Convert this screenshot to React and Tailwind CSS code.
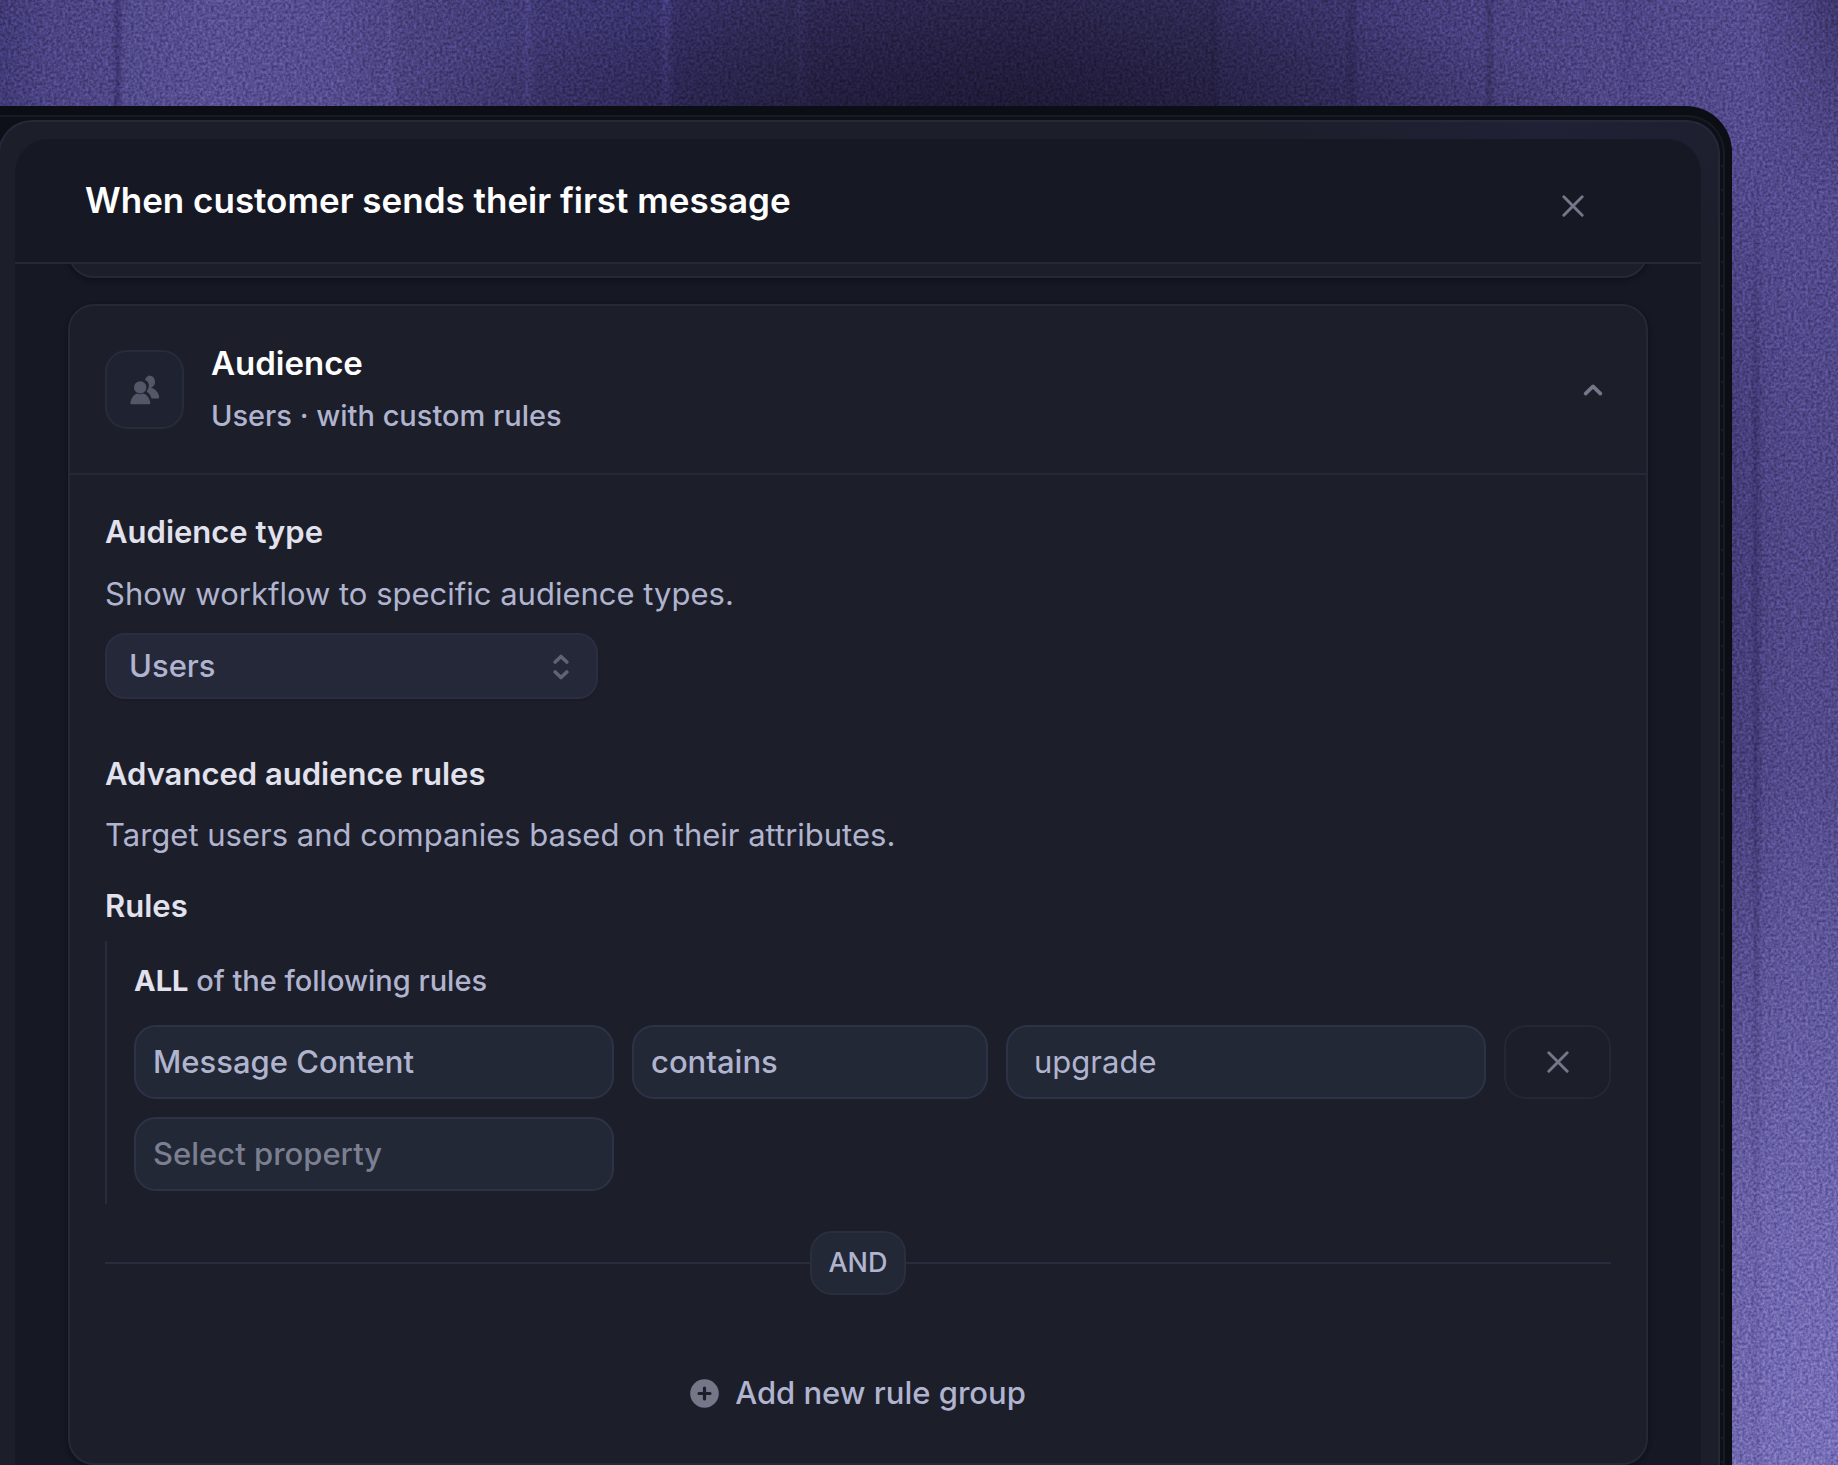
import { useId, useState } from "react";

function Backdrop() {
  return (
    <div aria-hidden="true" className="absolute inset-0 -z-10 overflow-hidden bg-[#4f4788]">
      <div className="absolute inset-0 bg-[linear-gradient(90deg,#403a76_0%,#4a4382_2.5%,#4e4686_6.1%,#3a3470_6.4%,#514a8a_6.7%,#574f92_12%,#544c8e_18%,#4d4584_20.9%,#524a8a_21.2%,#4a4380_21.6%,#413b76_28.4%,#474080_28.7%,#3e3872_29.2%,#38336c_35.9%,#423c7c_36.2%,#352f64_36.7%,#302b56_43.3%,#36305f_43.5%,#2f2954_44%,#2b254c_55%,#2f2a54_65.8%,#2b254c_66%,#322d5c_66.4%,#3a346a_73.2%,#332e60_73.5%,#3e3872_74%,#484180_80.7%,#3c366c_81%,#494280_81.4%,#4e4686_88.1%,#4a4282_88.4%,#4f4788_90%,#534b8c_95.6%,#4d4586_96.2%,#4a4280_97.5%,#3d366c_100%)]" />
      <div className="absolute inset-x-0 top-0 h-32 bg-[radial-gradient(ellipse_34%_110%_at_54%_100%,rgba(22,18,40,0.7),rgba(22,18,40,0)_100%)]" />
      <div className="absolute inset-y-0 right-0 w-[110px] bg-[linear-gradient(180deg,rgba(84,76,145,0)_0px,#534b8e_200px,#514989_520px,#544c8d_760px,#645ca2_1020px,#7068b0_1240px,#7870b9_100%)]" />
      <div className="absolute inset-y-0 right-0 w-[110px] bg-[linear-gradient(90deg,rgba(46,38,90,0.4),rgba(46,38,90,0.25)_20%,rgba(36,28,76,0.45)_25%,rgba(46,38,90,0.14)_32%,rgba(46,38,90,0.04)_60%,rgba(46,38,90,0.06)_100%)] [mask-image:linear-gradient(180deg,transparent_140px,black_420px,black_800px,rgba(0,0,0,0.3)_1200px)]" />
      <svg className="absolute inset-0 size-full opacity-25 mix-blend-overlay">
        <filter id="grain" x="0" y="0" width="100%" height="100%" colorInterpolationFilters="sRGB">
          <feTurbulence type="fractalNoise" baseFrequency="0.35" numOctaves="2" seed="4" />
          <feColorMatrix type="matrix" values="1.8 0 0 0 -0.4  1.8 0 0 0 -0.4  1.8 0 0 0 -0.4  0 0 0 0 1" />
        </filter>
        <rect width="100%" height="100%" filter="url(#grain)" />
      </svg>
    </div>
  );
}

function CrossIcon() {
  return (
    <svg viewBox="0 0 22 22" className="size-[22px]" fill="none" stroke="currentColor" strokeWidth="2.9" strokeLinecap="round" aria-hidden="true">
      <path d="M1.8 1.8 20.2 20.2M20.2 1.8 1.8 20.2" />
    </svg>
  );
}

function PeopleIcon() {
  return (
    <svg viewBox="0 0 30 30" className="size-[30px]" fill="currentColor" aria-hidden="true">
      <path d="M19 0.5a6.2 6.2 0 0 1 2 12c4.500 1.400 7.700 5.300 8.200 9.700 0.050 0.700-0.400 1.200-1 1.200h-6.700c-0.700-2.500-2-4.500-4-6.200l-0.900-1.300c1.400-1.400 2.300-3.300 2.300-5.300 0-2.700-1.600-4.700-4-5.600A6.200 6.200 0 0 1 19 0.500Z" />
      <circle cx="10.200" cy="12.400" r="6.200" />
      <path d="M6.600 18.500c2.200 0.900 5.100 0.900 7.300 0 3.500 1.600 5.900 5 6.400 9.300 0.100 0.900-0.400 1.500-1.200 1.500H1.600c-0.800 0-1.300-0.600-1.200-1.500 0.500-4.300 2.800-7.700 6.200-9.300Z" />
    </svg>
  );
}

function PlusCircleIcon() {
  return (
    <svg viewBox="0 0 29 29" className="size-[29px]" aria-hidden="true">
      <circle cx="14.500" cy="14.500" r="14.300" fill="#757789" />
      <path d="M14.500 9v11M9 14.500h11" stroke="#1c1e2a" strokeWidth="3.200" strokeLinecap="round" />
    </svg>
  );
}

const field =
  "h-[74px] w-full min-w-0 appearance-none rounded-[22px] border-2 border-[#2d3347] bg-[#222835] text-[31px] outline-none";

function PropertySelect({ label, options, className }) {
  const [value, setValue] = useState(options[0]);
  return (
    <select
      aria-label={label}
      value={value}
      onChange={(e) => setValue(e.target.value)}
      className={`${field} px-[17px] font-medium ${className}`}
    >
      {options.map((o) => (
        <option key={o}>{o}</option>
      ))}
    </select>
  );
}

function AudienceType() {
  const id = useId();
  return (
    <section>
      <label htmlFor={id} className="block text-[31px] leading-[44px] font-semibold text-[#e1e2ed]">
        Audience type
      </label>
      <p className="mt-[18px] text-[31px] leading-[44px] text-[#b0b4cf]">Show workflow to specific audience types.</p>
      <div className="relative mt-[17px] w-[493px] max-w-full text-[#606375]">
        <select
          id={id}
          defaultValue="Users"
          className="h-[66px] w-full appearance-none rounded-[20px] border-2 border-[#2a2e40] bg-[#252839] px-[22px] text-[31px] font-medium text-[#b0b4cf] shadow-[0_2px_2px_rgba(0,0,0,0.12)] outline-none"
        >
          <option>Users</option>
          <option>Leads</option>
          <option>Visitors</option>
        </select>
        <svg viewBox="0 0 16 26" className="pointer-events-none absolute top-[21px] right-[29px] h-[26px] w-4" fill="none" stroke="currentColor" strokeWidth="3.600" strokeLinecap="round" strokeLinejoin="round" aria-hidden="true">
          <path d="M2.200 8 8 2.500l5.800 5.500M2.200 18 8 23.500l5.800-5.500" />
        </svg>
      </div>
    </section>
  );
}

function AudienceRules() {
  return (
    <section className="mt-[53px]">
      <h3 className="text-[31px] leading-[44px] font-semibold text-[#e1e2ed]">Advanced audience rules</h3>
      <p className="mt-[17px] text-[31px] leading-[44px] text-[#b0b4cf]">
        Target users and companies based on their attributes.
      </p>
      <h4 className="mt-[27px] text-[31px] leading-[44px] font-semibold text-[#e1e2ed]">Rules</h4>

      <div className="mt-[13px] border-l-2 border-[#292c3c] pt-5 pb-[13px] pl-[27px]">
        <p className="text-[29px] leading-10 font-medium text-[#b0b4cf]">
          <strong className="font-bold text-[#e1e2ed]">ALL</strong> of the following rules
        </p>
        <div className="mt-6 grid grid-cols-[480fr_356fr_480fr_107fr] gap-[18px]">
          <PropertySelect label="Property" options={["Message Content", "Email", "Company"]} className="text-[#b0b4cf]" />
          <PropertySelect label="Operator" options={["contains", "is", "is not"]} className="text-[#b0b4cf]" />
          <input aria-label="Value" defaultValue="upgrade" className={`${field} px-[26px] pb-0.5 text-[#b0b4cf]`} />
          <button aria-label="Remove rule" className="flex h-[74px] items-center justify-center rounded-[22px] border-2 border-[#252734] text-[#757789]">
            <CrossIcon />
          </button>
          <PropertySelect label="New property" options={["Select property", "Email", "Company"]} className="text-[#7b7f91]" />
        </div>
      </div>

      <div className="mt-[27px] flex items-center">
        <span className="h-0.5 flex-1 bg-[#292c3c]" />
        <span className="flex h-16 w-24 items-center justify-center rounded-[22px] border-2 border-[#2a2e3d] bg-[#222835] text-[27px] font-medium text-[#b0b4cf]">
          AND
        </span>
        <span className="h-0.5 flex-1 bg-[#292c3c]" />
      </div>

      <button className="mx-auto mt-[76px] flex items-center gap-4 text-[31px] leading-[44px] font-medium text-[#b0b4cf]">
        <PlusCircleIcon />
        Add new rule group
      </button>
    </section>
  );
}

const card = "rounded-[26px] border-2 border-[#242937] bg-[#1c1e2a] shadow-[0_2px_4px_1px_rgba(8,9,15,0.4)]";

export default function App() {
  return (
    <div className="relative isolate flex h-screen flex-col overflow-hidden pt-[106px] pr-[106px] font-['Inter',sans-serif]">
      <Backdrop />
      <div className="flex min-h-0 flex-1 flex-col rounded-tr-[46px] bg-[#0c0e15] pt-[9px] pr-[7px]">
        <div className="flex min-h-0 flex-1 flex-col rounded-tr-[38px] border-t-2 border-r-2 border-[#181a24] bg-[#0e1018] bg-[repeating-linear-gradient(180deg,#1a1c27_0_2px,#0e1018_2px_24px)] [background-size:2px_100%] bg-right bg-no-repeat pt-[3px] pr-[3px]">
          <div className="-ml-0.5 flex min-h-0 flex-1 flex-col rounded-t-[34px] border-2 border-b-0 border-[#252937] bg-[#1c1e2a] bg-[radial-gradient(ellipse_300px_140px_at_90%_0%,#202136,transparent)] pt-[17px] pr-[17px] pl-[15px]">
            <main className="flex min-h-0 flex-1 flex-col overflow-hidden rounded-t-[34px] bg-[#161823]">
              <header className="flex shrink-0 items-start justify-between border-b-2 border-[#242734] pt-10 pr-[102px] pb-[30px] pl-[70px]">
                <h1 className="text-[35px] leading-[42px] font-semibold text-white">
                  When customer sends their first message
                </h1>
                <button aria-label="Close" className="flex size-[53px] items-center justify-center text-[#757789]">
                  <CrossIcon />
                </button>
              </header>

              <div className="flex min-h-0 flex-1 flex-col gap-[26px] overflow-hidden px-[53px]">
                <div className={`${card} -mt-[66px] h-20 shrink-0`} />
                <section className={`${card} shrink-0`}>
                  <div className="flex items-center border-b-2 border-[#242937] px-[35px] py-[35px]">
                    <span className="flex size-[79px] items-center justify-center rounded-[22px] border-2 border-[#262c3c] bg-[#1f2230] text-[#545767]">
                      <PeopleIcon />
                    </span>
                    <div className="ml-[27px] flex flex-1 flex-col gap-[9px]">
                      <h2 className="text-[33px] leading-[44px] font-semibold text-white">Audience</h2>
                      <p className="text-[29px] leading-[44px] font-medium text-[#b0b4cf]">Users · with custom rules</p>
                    </div>
                    <button aria-label="Collapse audience" aria-expanded="true" className="flex size-9 items-center justify-center text-[#757789]">
                      <svg viewBox="0 0 20 12" className="h-3 w-5" fill="none" stroke="currentColor" strokeWidth="3.600" strokeLinecap="round" strokeLinejoin="round" aria-hidden="true">
                        <path d="M2.600 9.600 10 2.400l7.400 7.200" />
                      </svg>
                    </button>
                  </div>
                  <div className="px-[35px] pt-[35px] pb-12">
                    <AudienceType />
                    <AudienceRules />
                  </div>
                </section>
              </div>
            </main>
          </div>
        </div>
      </div>
    </div>
  );
}
